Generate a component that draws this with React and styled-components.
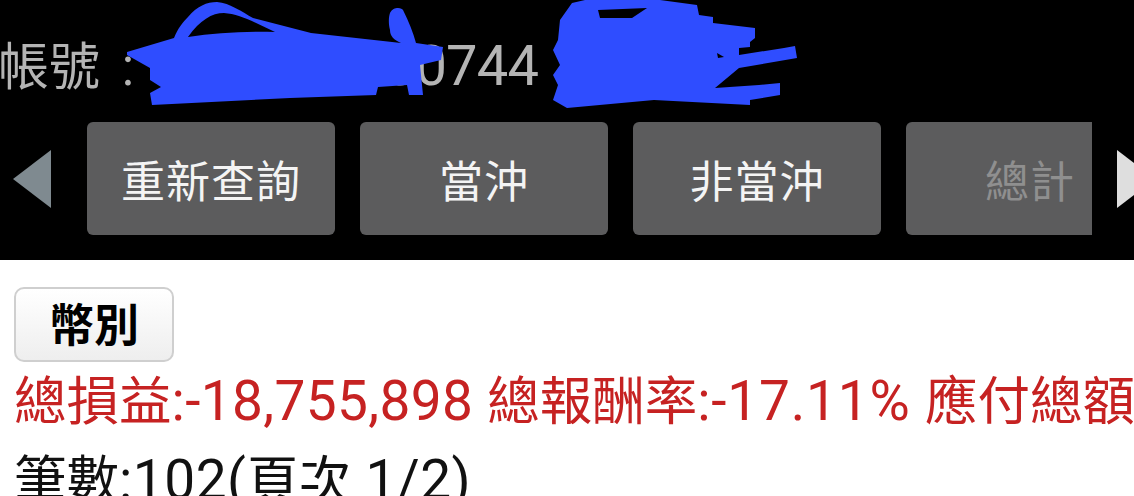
import React from 'react';
import styled, { createGlobalStyle } from 'styled-components';

const GlobalStyle = createGlobalStyle`
  html, body {
    margin: 0;
    padding: 0;
    background: #fff;
  }
  body {
    font-family: Roboto, "Noto Sans CJK TC", sans-serif;
  }
`;

const Page = styled.div`
  width: 1134px;
  height: 496px;
  overflow: hidden;
`;

const Header = styled.header`
  position: relative;
  height: 260px;
  background: #000;
  overflow: hidden;
`;

const Account = styled.div`
  height: 122px;
  margin-left: -2px;
  padding-top: 38px;
  box-sizing: border-box;
  font-size: 51px;
  line-height: 60px;
  color: #b4b4b4;
  white-space: nowrap;
`;

const Colon = styled.span`
  margin: 0 36px 0 9px;
`;

const Digits = styled.span`
  font-size: ${(p) => p.$size}px;
  letter-spacing: ${(p) => p.$spacing || 0}px;
  line-height: 0;
`;

const Scribble = styled.svg`
  position: absolute;
  left: 0;
  top: 0;
  width: 1134px;
  height: 130px;
  fill: #2f4dff;
`;

const Toolbar = styled.div`
  display: flex;
  align-items: center;
  height: 113px;
`;

const ArrowSlot = styled.div`
  flex: none;
  width: ${(p) => p.$width}px;
  display: flex;
  justify-content: ${(p) => (p.$right ? 'flex-end' : 'flex-start')};
  padding-left: ${(p) => (p.$left ? 13 : 0)}px;
  box-sizing: border-box;
`;

const Arrow = styled.div`
  width: 0;
  height: 0;
  border-top: 29px solid transparent;
  border-bottom: 29px solid transparent;
  ${(p) =>
    p.$right
      ? `border-left: 38px solid #dedede; margin-right: -21px;`
      : `border-right: 38px solid #7f8a90;`}
`;

const Tabs = styled.div`
  flex: none;
  display: flex;
  gap: 25px;
  width: 1005px;
  overflow: hidden;
`;

const Tab = styled.div`
  flex: none;
  width: 248px;
  height: 113px;
  display: flex;
  align-items: center;
  justify-content: center;
  background: #5c5c5d;
  border-radius: 6px;
  font-size: 44px;
  letter-spacing: 1px;
  color: ${(p) => (p.$dim ? '#8f8f8f' : '#f4f4f4')};
`;

const Body = styled.main`
  padding: 27px 0 0 14px;
  white-space: nowrap;
`;

const CurrencyButton = styled.div`
  width: 160px;
  height: 75px;
  padding-bottom: 4px;
  box-sizing: border-box;
  display: flex;
  align-items: center;
  justify-content: center;
  border: 2px solid #cfcfcf;
  border-radius: 10px;
  background: linear-gradient(#ffffff, #eeeeee);
  font-size: 45px;
  font-weight: 700;
  color: #000;
`;

const Summary = styled.div`
  font-size: 52.5px;
  line-height: 64px;
  margin-top: ${(p) => p.$gap}px;
  color: ${(p) => (p.$red ? '#c62222' : '#111')};
`;

const App = () => {
  return (
    <Page lang="zh-Hant">
      <GlobalStyle />
      <Header>
        <Account>
          帳號 <Colon>:</Colon><Digits $size={56} $spacing={-0.8}>000000000744</Digits>
        </Account>
        <Toolbar>
          <ArrowSlot $left $width={87}>
            <Arrow />
          </ArrowSlot>
          <Tabs>
            <Tab>重新查詢</Tab>
            <Tab>當沖</Tab>
            <Tab>非當沖</Tab>
            <Tab $dim>總計</Tab>
          </Tabs>
          <ArrowSlot $right $width={42}>
            <Arrow $right />
          </ArrowSlot>
        </Toolbar>
        <Scribble viewBox="0 0 1134 130">
          <path
            fillRule="evenodd"
            d="M127 52 L174 38 C178 28 183 22 188 17 C197 6 207 2 217 2 C230 3 242 12 253 18 L311 33 L401 43 C394 40 390 36 390 30 C388 22 389 16 390 13 C392 9 395 8 398 8 C401 8 402 9 403 10 C409 22 413 32 416 43 L443 47 L441 60 L420 65 L423 95 L409 95 L407 85 L378 87 L376 95 L290 98 L152 105 L150 93 L161 87 L150 80 L150 68 L127 55 Z M188 37 C200 20 212 13 224 13 C240 14 258 24 275 32 C245 31 215 33 188 37 Z"
          />
          <path
            fillRule="evenodd"
            d="M553 50 L560 65 L553 75 L558 85 L553 100 L567 108 L654 100 L750 105 L750 100 L780 95 L780 83 L759 85 L715 88 L739 68 L797 58 L795 46 L784 48 L739 55 L739 48 L750 47 L750 42 L755 38 L755 28 L713 23 L713 17 L699 15 L697 5 L660 0 L585 0 L572 3 L560 20 L558 40 Z M598 10 L647 8 L632 18 L600 18 Z M717 53 L724 57 L718 58 Z"
          />
        </Scribble>
      </Header>
      <Body>
        <CurrencyButton>幣別</CurrencyButton>
        <Summary $red $gap={8}>
          總損益<Digits $size={55} $spacing={0.35}>:-18,755,898 </Digits>總報酬率
          <Digits $size={55} $spacing={0.8}>:-17.11% </Digits>應付總額
        </Summary>
        <Summary $gap={15}>
          筆數<Digits $size={55} $spacing={0.5}>:102(</Digits>頁次<Digits $size={55} $spacing={0.5}> 1/2)</Digits>
        </Summary>
      </Body>
    </Page>
  );
};

export default App;
